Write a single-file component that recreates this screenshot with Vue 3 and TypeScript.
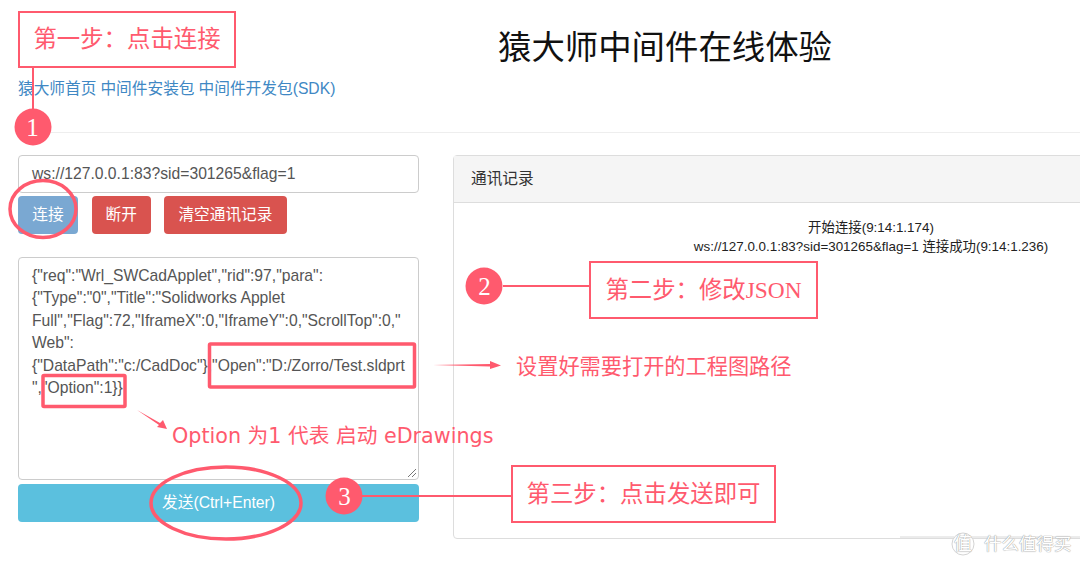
<script setup lang="ts">
const links: string[] = ['猿大师首页', '中间件安装包', '中间件开发包(SDK)']
const json = `{"req":"Wrl_SWCadApplet","rid":97,"para":
{"Type":"0","Title":"Solidworks Applet
Full","Flag":72,"IframeX":0,"IframeY":0,"ScrollTop":0,"
Web":
{"DataPath":"c:/CadDoc"},"Open":"D:/Zorro/Test.sldprt
","Option":1}}`
</script>

<template>
  <div class="viewport">
    <div class="page">
      <h1 class="title">猿大师中间件在线体验</h1>
      <nav class="links">
        <a v-for="l in links" :key="l" class="link">{{ l }}</a>
      </nav>
      <hr class="rule" />
      <main class="cols">
        <section class="left">
          <div class="input">ws://127.0.0.1:83?sid=301265&amp;flag=1</div>
          <div class="btns">
            <button class="btn blue">连接</button>
            <button class="btn red">断开</button>
            <button class="btn red">清空通讯记录</button>
          </div>
          <div class="area">
            <pre class="json">{{ json }}</pre>
            <svg class="grip" width="10" height="10" viewBox="0 0 10 10">
              <path d="M1 9 9 1M5 9 9 5" stroke="#777" stroke-width="1" fill="none" />
            </svg>
          </div>
          <button class="send">发送(Ctrl+Enter)</button>
        </section>
        <section class="panel">
          <header class="panel-head">通讯记录</header>
          <div class="panel-body">
            <p>开始连接(9:14:1.174)</p>
            <p>ws://127.0.0.1:83?sid=301265&amp;flag=1 连接成功(9:14:1.236)</p>
          </div>
        </section>
      </main>
    </div>

    <svg class="marks" width="1080" height="566" viewBox="0 0 1080 566">
      <g fill="none" stroke="#ff5a6e">
        <path d="M33 68V110" stroke-width="2" />
        <ellipse cx="43" cy="209" rx="33" ry="28.500" stroke-width="3.500" />
        <ellipse cx="226" cy="503" rx="75" ry="36" stroke-width="3.500" />
        <path d="M503 286H590M362 496H512" stroke-width="2" />
        <rect x="209.500" y="344" width="205" height="43" rx="1" stroke-width="3.500" />
        <rect x="43" y="375.500" width="82" height="31" rx="1" stroke-width="3.500" />
      </g>
      <g fill="#ff5a6e">
        <circle cx="33" cy="127" r="18.500" />
        <circle cx="484" cy="286" r="18.500" />
        <circle cx="344" cy="496" r="18.500" />
        <path d="M433 365 490 364V361L501 365.500 490 369V366.500Z" />
        <path d="M137 410 160 423 163 420 167 429 157 427 159 425Z" />
      </g>
      <path d="M900 537H954M972 537H1080" stroke="#d8d8d8" stroke-width="1" />
      <circle cx="963" cy="544" r="11" fill="#fff" stroke="#d4d4d4" stroke-width="1" />
    </svg>

    <div class="box box1">第一步：点击连接</div>
    <div class="box box2">第二步：修改JSON</div>
    <div class="box box3">第三步：点击发送即可</div>
    <span class="num n1">1</span>
    <span class="num n2">2</span>
    <span class="num n3">3</span>
    <span class="note note-path">设置好需要打开的工程图路径</span>
    <span class="note note-option">Option 为1 代表 启动 eDrawings</span>
    <span class="wm wm-badge">值</span>
    <span class="wm wm-text">什么值得买</span>
  </div>
</template>

<style>
html, body { margin: 0; background: #fff; overflow: hidden; }
</style>

<style scoped>
.viewport {
  position: relative;
  width: 1080px;
  height: 566px;
  overflow: hidden;
  background: #fff;
  font-family: "Liberation Sans", "Noto Sans CJK SC", sans-serif;
  font-size: 15.700px;
  line-height: 22.400px;
  color: #555;
}
.page {
  box-sizing: border-box;
  width: 1330px;
  padding: 0 18px;
}
.title {
  margin: 0;
  padding-top: 26px;
  height: 78px;
  box-sizing: border-box;
  text-align: center;
  font-size: 33.400px;
  line-height: 44px;
  font-weight: 400;
  color: #111;
}
.links {
  display: flex;
  gap: 4px;
  height: 22px;
  color: #4088c4;
}
.rule {
  margin: 32px 0 22px;
  border: 0;
  border-top: 1px solid #eee;
}
.cols {
  display: flex;
  gap: 34px;
  align-items: flex-start;
}
.left {
  display: flex;
  flex-direction: column;
  width: 401px;
  flex: none;
}
.input {
  box-sizing: border-box;
  height: 38px;
  padding: 7px 13px;
  border: 1px solid #ccc;
  border-radius: 4px;
  white-space: nowrap;
}
.btns {
  display: flex;
  gap: 13.500px;
  margin-top: 3px;
}
.btn {
  height: 38px;
  padding: 0 14px;
  border: 0;
  border-radius: 4px;
  font: inherit;
  color: #fff;
}
.blue { background: #7aa8d2; width: 60px; }
.red { background: #d9534f; }
.area {
  position: relative;
  box-sizing: border-box;
  height: 223px;
  margin-top: 23px;
  padding: 7px 13px;
  border: 1px solid #ccc;
  border-radius: 4px;
}
.json {
  margin: 0;
  font: inherit;
  white-space: pre;
}
.grip { position: absolute; right: 1px; bottom: 1px; }
.send {
  height: 38px;
  margin-top: 4px;
  padding: 0;
  border: 0;
  border-radius: 4px;
  background: #5bc0de;
  color: #fff;
  font: inherit;
}
.panel {
  box-sizing: border-box;
  width: 836px;
  height: 384px;
  flex: none;
  border: 1px solid #ddd;
  border-radius: 4px;
}
.panel-head {
  box-sizing: border-box;
  height: 47px;
  padding: 12px 17px;
  background: #f5f5f5;
  border-bottom: 1px solid #ddd;
  color: #333;
}
.panel-body {
  padding: 15px;
  text-align: center;
  font-size: 13.400px;
  line-height: 19px;
  color: #222;
}
.panel-body p { margin: 0; }
.marks { position: absolute; left: 0; top: 0; pointer-events: none; }
.box {
  position: absolute;
  box-sizing: border-box;
  display: flex;
  align-items: center;
  justify-content: center;
  background: #fff;
  border: 2px solid #ff5a6e;
  color: #ff5a6e;
  font-family: "Liberation Serif", "Noto Sans CJK SC", serif;
  font-size: 23.400px;
  white-space: nowrap;
}
.box1 { left: 18px; top: 11px; width: 218px; height: 57px; }
.box2 { left: 589px; top: 261px; width: 229px; height: 58px; }
.box3 { left: 511px; top: 465px; width: 265px; height: 58px; }
.num {
  position: absolute;
  width: 37px;
  text-align: center;
  color: #fff;
  font-family: "Liberation Serif", serif;
  font-size: 25px;
  line-height: 37px;
}
.n1 { left: 14px; top: 109px; }
.n2 { left: 466px; top: 268px; }
.n3 { left: 326px; top: 478px; }
.note {
  position: absolute;
  color: #ff5a6e;
  white-space: nowrap;
}
.note-path { left: 516px; top: 352px; font-size: 21.200px; line-height: 30px; }
.note-option {
  left: 172px;
  top: 421px;
  font-family: "DejaVu Sans", "Noto Sans CJK SC", sans-serif;
  font-size: 20.700px;
  line-height: 30px;
}
.wm {
  position: absolute;
  color: #fff;
  text-shadow: 0 0 1px #999, 0 0 1px #999;
  white-space: nowrap;
}
.wm-badge { left: 954px; top: 533px; font-size: 18px; line-height: 22px; }
.wm-text { left: 984px; top: 531px; font-size: 17.500px; line-height: 26px; }
</style>
